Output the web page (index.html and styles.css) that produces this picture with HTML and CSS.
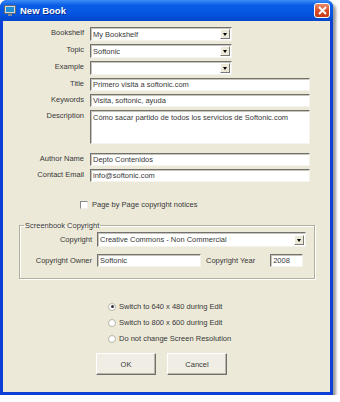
FILE: index.html
```html
<!DOCTYPE html>
<html lang="en">
<head>
  <meta charset="UTF-8" />
  <title>New Book</title>
  <link rel="stylesheet" href="styles.css">
</head>
<body>

<div class="window">
  <div class="titlebar">
    <svg class="app-icon" width="12" height="11" viewBox="0 0 12 11">
      <rect x="0.5" y="0.5" width="11" height="8" fill="#d8d8d8" stroke="#5a6a7a"/>
      <rect x="2" y="2" width="8" height="5" fill="#1c8fd8"/>
      <rect x="4" y="9" width="4" height="2" fill="#7a8a9a"/>
    </svg>
    <span class="title">New Book</span>
    <button class="close-btn">
      <svg width="9" height="9" viewBox="0 0 9 9"><path d="M1 1 L8 8 M8 1 L1 8" stroke="#fff" stroke-width="2"/></svg>
    </button>
  </div>

  <div class="client">
    <div class="form">
      <div class="row">
        <label>Bookshelf</label>
        <div class="combo short"><span>My Bookshelf</span><i class="drop"></i></div>
      </div>
      <div class="row">
        <label>Topic</label>
        <div class="combo short"><span>Softonic</span><i class="drop"></i></div>
      </div>
      <div class="row">
        <label>Example</label>
        <div class="combo short"><span></span><i class="drop"></i></div>
      </div>
      <div class="row">
        <label>Title</label>
        <div class="field wide">Primero visita a softonic.com</div>
      </div>
      <div class="row">
        <label>Keywords</label>
        <div class="field wide">Visita, softonic, ayuda</div>
      </div>
      <div class="row">
        <label>Description</label>
        <div class="field wide area">Cómo sacar partido de todos los servicios de Softonic.com</div>
      </div>
      <div class="row spaced">
        <label>Author Name</label>
        <div class="field wide">Depto Contenidos</div>
      </div>
      <div class="row">
        <label>Contact Email</label>
        <div class="field wide">info@softonic.com</div>
      </div>
    </div>

    <div class="check-row">
      <span class="checkbox"></span>
      <span>Page by Page copyright notices</span>
    </div>

    <fieldset class="group">
      <legend>Screenbook Copyright</legend>
      <div class="grow">
        <label class="glabel">Copyright</label>
        <div class="combo gcombo"><span>Creative Commons - Non Commercial</span><i class="drop"></i></div>
      </div>
      <div class="grow">
        <label class="glabel">Copyright Owner</label>
        <div class="field owner">Softonic</div>
        <label class="year-label">Copyright Year</label>
        <div class="field year">2008</div>
      </div>
    </fieldset>

    <div class="radios">
      <div class="radio-row"><span class="radio on"></span>Switch to 640 x 480 during Edit</div>
      <div class="radio-row"><span class="radio"></span>Switch to 800 x 600 during Edit</div>
      <div class="radio-row"><span class="radio"></span>Do not change Screen Resolution</div>
    </div>

    <div class="buttons">
      <button class="btn">OK</button>
      <button class="btn">Cancel</button>
    </div>
  </div>
</div>

</body>
</html>
```

FILE: styles.css
```css
* { box-sizing: border-box; margin: 0; padding: 0; }
body {
  background: #fff;
  font-family: 'Liberation Sans', Arial, sans-serif;
  font-size: 7.5px;
  color: #383838;
}

.window {
  width: 333px;
  height: 395px;
  background: #0b3fd6;
  border-radius: 7px 7px 0 0;
  box-shadow: 3px 3px 3px rgba(0, 0, 0, 0.4);
  display: flex;
  flex-direction: column;
}

.titlebar {
  height: 21px;
  display: flex;
  align-items: center;
  padding: 0 3px 0 4px;
  border-radius: 7px 7px 0 0;
  background: linear-gradient(#3d8cf6, #0a5ee6 25%, #0453e0 70%, #0646c8);
}
.app-icon { margin-right: 4px; }
.title {
  flex: 1;
  color: #fff;
  font-weight: bold;
  font-size: 9.5px;
  text-shadow: 1px 1px 0 #0b2a8c;
}
.close-btn {
  width: 16px;
  height: 15px;
  border: 1px solid #fff;
  border-radius: 3px;
  background: linear-gradient(#e88a6c, #d9451e 60%, #c33a16);
  display: flex;
  align-items: center;
  justify-content: center;
}

.client {
  flex: 1;
  margin: 0 3px 3px;
  background: #ece9d8;
  padding-top: 6px;
}

.form {
  display: flex;
  flex-direction: column;
  gap: 3px;
}
.row {
  display: flex;
  align-items: flex-start;
}
.row label {
  width: 81px;
  margin-right: 6px;
  text-align: right;
  padding-top: 1px;
}
.row.spaced { margin-top: 6px; }

.field, .combo {
  background: #fff;
  border: 1px solid;
  border-color: #717171 #f4f3ee #f4f3ee #717171;
  box-shadow: inset 1px 1px 0 #c8c5b8;
  height: 13px;
  line-height: 11px;
  padding-left: 2px;
  white-space: nowrap;
  overflow: hidden;
}
.combo {
  height: 14px;
  display: flex;
  align-items: center;
  justify-content: space-between;
  padding-right: 1px;
}
.short { width: 142px; }
.wide { width: 220px; }
.area { height: 34px; padding-top: 1px; }

.drop {
  width: 10px;
  height: 10px;
  background: #ece9d8;
  border: 1px solid;
  border-color: #fff #7a7a7a #7a7a7a #fff;
  position: relative;
}
.drop::after {
  content: "";
  position: absolute;
  left: 2px;
  top: 3px;
  border-left: 2px solid transparent;
  border-right: 2px solid transparent;
  border-top: 3px solid #000;
}

.check-row {
  display: flex;
  align-items: center;
  gap: 4px;
  margin: 18px 0 0 77px;
}
.checkbox {
  width: 8px;
  height: 8px;
  background: #fff;
  border: 1px solid;
  border-color: #8a8a8a #eee #eee #8a8a8a;
}

.group {
  margin: 12px 0 0 16px;
  width: 296px;
  height: 58px;
  border: 1px solid #b2ae9e;
  box-shadow: 1px 1px 0 #fff, inset 1px 1px 0 #fff;
  padding: 2px 0 0;
  display: flex;
  flex-direction: column;
  gap: 7px;
}
.group legend {
  margin-left: 4px;
  padding: 0 1px;
}
.grow {
  display: flex;
  align-items: center;
}
.glabel {
  width: 72px;
  text-align: right;
  margin-right: 5px;
}
.gcombo { width: 209px; height: 15px; }
.owner { width: 104px; }
.year-label { margin: 0 15px 0 5px; }
.year { width: 33px; }

.radios {
  margin: 23px 0 0 105px;
  display: flex;
  flex-direction: column;
  gap: 7px;
}
.radio-row {
  display: flex;
  align-items: center;
  gap: 3px;
}
.radio {
  width: 8px;
  height: 8px;
  border-radius: 50%;
  background: #fff;
  border: 1px solid #b8b6ac;
  position: relative;
}
.radio.on::after {
  content: "";
  position: absolute;
  left: 1.5px;
  top: 1.5px;
  width: 3px;
  height: 3px;
  border-radius: 50%;
  background: #333;
}

.buttons {
  display: flex;
  gap: 11px;
  margin: 10px 0 0 93px;
}
.btn {
  width: 60px;
  height: 22px;
  font-family: 'Liberation Sans', Arial, sans-serif;
  font-size: 7.5px;
  color: #383838;
  background: #f0eee4;
  border: 1px solid;
  border-color: #fff #6f6f6f #6f6f6f #fff;
  box-shadow: inset -1px -1px 0 #b8b5a6;
}
```
